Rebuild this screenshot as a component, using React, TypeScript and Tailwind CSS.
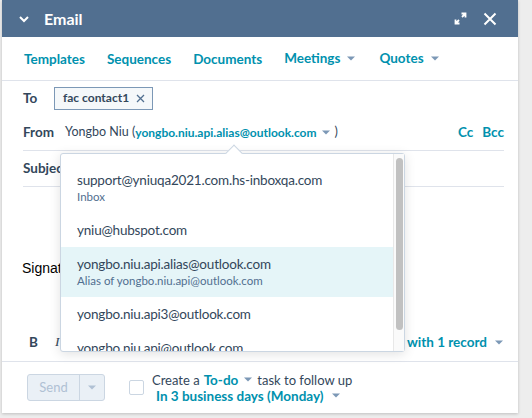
import React from "react";

const Caret = ({ className = "" }: { className?: string }) => (
  <svg width="8" height="5" viewBox="0 0 8 5" className={className}>
    <path d="M0 0.5h8L4 4.5z" fill="currentColor" />
  </svg>
);

const emails = [
  { main: "support@yniuqa2021.com.hs-inboxqa.com", sub: "Inbox" },
  { main: "yniu@hubspot.com" },
  { main: "yongbo.niu.api.alias@outlook.com", sub: "Alias of yongbo.niu.api@outlook.com", active: true },
  { main: "yongbo.niu.api3@outlook.com" },
  { main: "yongbo.niu.api@outlook.com" },
];

const App = () => {
  return (
    <div
      className="w-[532px] h-[418px] bg-[#ededed] overflow-hidden"
      style={{ fontFamily: "Lato, sans-serif" }}
    >
      <div className="relative ml-[2px] w-[516px] h-[413px] bg-white flex flex-col shadow-[0_1px_3px_rgba(0,0,0,0.2)]">
        {/* header */}
        <div className="h-[37px] bg-[#516f90] flex items-center text-white pl-[16px] pr-[21px]">
          <svg width="12" height="8" viewBox="0 0 12 8" className="mr-[14px]">
            <path d="M2 2l4 4 4-4" stroke="white" strokeWidth="2" fill="none" />
          </svg>
          <span className="text-[16px] font-bold">Email</span>
          <div className="ml-auto flex items-center gap-[16px]">
            <svg width="13" height="13" viewBox="0 0 13 13">
              <path d="M7.5 1.5h4v4M11.5 1.5L8 5M5.5 11.5h-4v-4M1.5 11.5L5 8" stroke="white" strokeWidth="1.8" fill="none" />
            </svg>
            <svg width="14" height="14" viewBox="0 0 14 14">
              <path d="M1.5 1.5l11 11M12.5 1.5l-11 11" stroke="white" strokeWidth="2" />
            </svg>
          </div>
        </div>

        {/* tabs */}
        <div className="h-[44px] border-b border-[#dfe3eb] flex items-center pl-[22px] gap-[22px] text-[13.5px] font-bold text-[#0091ae]">
          <span className="mt-[2px]">Templates</span>
          <span className="mt-[2px]">Sequences</span>
          <span className="mt-[2px]">Documents</span>
          <span className="flex items-center gap-[7px]">
            Meetings <Caret className="text-[#7c98b6]" />
          </span>
          <span className="flex items-center gap-[7px] ml-[2px]">
            Quotes <Caret className="text-[#7c98b6]" />
          </span>
        </div>

        {/* fields */}
        <div className="pl-[21px] pr-[14px] text-[13.5px] text-[#33475b]">
          <div className="h-[34px] flex items-center">
            <span className="w-[31px] font-bold">To</span>
            <span className="h-[23px] flex items-center gap-[7px] pl-[8px] pr-[7px] bg-[#f5f8fa] border border-[#7c98b6] font-bold text-[12px]">
              fac contact1
              <svg width="9" height="9" viewBox="0 0 9 9">
                <path d="M1 1l7 7M8 1l-7 7" stroke="#516f90" strokeWidth="1.3" />
              </svg>
            </span>
          </div>
          <div className="h-[36px] flex items-center border-b border-[#dfe3eb]">
            <span className="w-[42px] font-bold">From</span>
            <span className="text-[12.5px]">Yongbo Niu (</span>
            <span className="font-bold text-[#0091ae] text-[12px]">yongbo.niu.api.alias@outlook.com</span>
            <Caret className="text-[#7c98b6] mx-[5px]" />
            <span className="text-[12.5px]">)</span>
            <span className="ml-auto font-bold text-[#0091ae] flex gap-[9px]">
              <span>Cc</span>
              <span>Bcc</span>
            </span>
          </div>
          <div className="h-[36px] flex items-center border-b border-[#dfe3eb]">
            <span className="font-bold">Subject</span>
          </div>
        </div>

        {/* body */}
        <div className="flex-1 flex flex-col border-b border-[#dfe3eb]">
          <div className="flex-1 pl-[20px] pt-[71px] text-[14px] text-black" style={{ fontFamily: "'Liberation Sans', sans-serif" }}>
            Signature
          </div>
          <div className="h-[42px] flex items-start pt-[13px] pl-[27px] pr-[15px] text-[13.5px] text-[#33475b]">
            <span className="font-bold">B</span>
            <span className="italic ml-[17px]" style={{ fontFamily: "'Liberation Serif', serif" }}>I</span>
            <span className="ml-auto font-bold text-[#0091ae] flex items-center gap-[8px]">
              Log email with 1 record <Caret className="text-[#7c98b6]" />
            </span>
          </div>
        </div>

        {/* footer */}
        <div className="h-[51px] flex items-center pl-[25px] text-[13px] text-[#33475b]">
          <div className="h-[27px] w-[78px] flex border border-[#cbd6e2] bg-[#eaf0f6] rounded-[3px] text-[#b0c1d4]">
            <span className="flex-1 flex items-center justify-center border-r border-[#cbd6e2]">Send</span>
            <span className="w-[24px] flex items-center justify-center">
              <Caret />
            </span>
          </div>
          <span className="ml-[24px] w-[15px] h-[15px] border border-[#cbd6e2] rounded-[2px] bg-white" />
          <div className="ml-[8px] flex flex-col leading-[16px]">
            <span className="flex items-center">
              <span>Create a</span>
              <span className="font-bold text-[#0091ae] ml-[4px] mr-[6px] text-[13.5px]">To-do</span>
              <Caret className="text-[#7c98b6] mr-[5px]" />
              <span>task to follow up</span>
            </span>
            <span className="flex items-center ml-[4px] font-bold text-[#0091ae] text-[13.5px]">
              <span>In 3 business days (Monday)</span>
              <Caret className="text-[#7c98b6] ml-[8px]" />
            </span>
          </div>
        </div>

        {/* from dropdown */}
        <div className="absolute left-[58px] top-[153px] w-[345px] h-[199px] bg-white border border-[#cbd6e2] rounded-[3px] shadow-[0_2px_12px_rgba(0,0,0,0.12)] text-[#33475b]">
          <div className="absolute left-[167px] -top-[7px] w-[12px] h-[12px] rotate-45 bg-white border-l border-t border-[#cbd6e2]" />
          <div className="h-full overflow-hidden flex">
            <div className="flex-1 pt-[9px]">
              {emails.map((e) => (
                <div key={e.main} className={`px-[16px] py-[8px] ${e.active ? "bg-[#e5f5f8]" : ""}`}>
                  <div className="text-[13.5px] leading-[18px] tracking-[-0.2px]">{e.main}</div>
                  {e.sub && <div className="text-[11.5px] leading-[16px] text-[#516f90]">{e.sub}</div>}
                </div>
              ))}
            </div>
            <div className="w-[11px] border-l border-[#e8e8e8] bg-[#fafafa] py-[4px] flex justify-center">
              <div className="w-[7px] h-[172px] rounded-full bg-[#c1c1c1]" />
            </div>
          </div>
        </div>
      </div>
    </div>
  );
};

export default App;
